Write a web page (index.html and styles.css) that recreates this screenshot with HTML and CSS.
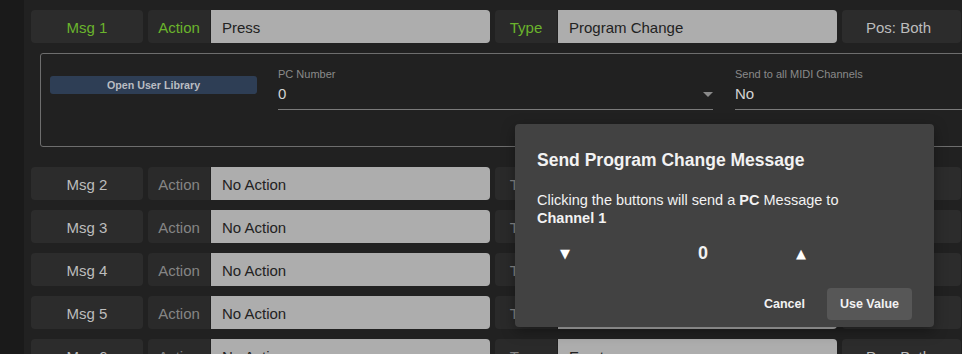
FILE: index.html
```html
<!DOCTYPE html>
<html lang="en">
<head>
  <meta charset="UTF-8" />
  <title>Messages</title>
  <link rel="stylesheet" href="styles.css">
</head>
<body>

<div class="app">
  <div class="sidebar"></div>

  <main class="main">
    <div class="row active">
      <div class="cell msg">Msg 1</div>
      <div class="field">
        <div class="label">Action</div>
        <div class="value">Press</div>
      </div>
      <div class="field">
        <div class="label">Type</div>
        <div class="value">Program Change</div>
      </div>
      <div class="cell pos">Pos: Both</div>
    </div>

    <div class="panel">
      <button class="lib-btn">Open User Library</button>
      <div class="input-field">
        <div class="input-label">PC Number</div>
        <div class="input-value">0 <span class="caret"></span></div>
      </div>
      <div class="input-field">
        <div class="input-label">Send to all MIDI Channels</div>
        <div class="input-value">No</div>
      </div>
    </div>

    <div class="row">
      <div class="cell msg">Msg 2</div>
      <div class="field"><div class="label">Action</div><div class="value">No Action</div></div>
      <div class="field"><div class="label">Type</div><div class="value">Empty</div></div>
      <div class="cell pos">Pos: Both</div>
    </div>
    <div class="row">
      <div class="cell msg">Msg 3</div>
      <div class="field"><div class="label">Action</div><div class="value">No Action</div></div>
      <div class="field"><div class="label">Type</div><div class="value">Empty</div></div>
      <div class="cell pos">Pos: Both</div>
    </div>
    <div class="row">
      <div class="cell msg">Msg 4</div>
      <div class="field"><div class="label">Action</div><div class="value">No Action</div></div>
      <div class="field"><div class="label">Type</div><div class="value">Empty</div></div>
      <div class="cell pos">Pos: Both</div>
    </div>
    <div class="row">
      <div class="cell msg">Msg 5</div>
      <div class="field"><div class="label">Action</div><div class="value">No Action</div></div>
      <div class="field"><div class="label">Type</div><div class="value">Empty</div></div>
      <div class="cell pos">Pos: Both</div>
    </div>
    <div class="row">
      <div class="cell msg">Msg 6</div>
      <div class="field"><div class="label">Action</div><div class="value">No Action</div></div>
      <div class="field"><div class="label">Type</div><div class="value">Empty</div></div>
      <div class="cell pos">Pos: Both</div>
    </div>
  </main>
</div>

<!-- PC dialog -->
<div class="dialog">
  <h2 class="dialog-title">Send Program Change Message</h2>
  <p class="dialog-text">Clicking the buttons will send a <b>PC</b> Message to<br><b>Channel 1</b></p>
  <div class="stepper">
    <button class="step-btn">&#9660;</button>
    <span class="step-value">0</span>
    <button class="step-btn up">&#9650;</button>
  </div>
  <div class="dialog-actions">
    <button class="text-btn">Cancel</button>
    <button class="use-btn">Use Value</button>
  </div>
</div>

</body>
</html>
```

FILE: styles.css
```css
body {
  font-family: "Liberation Sans", Arial, sans-serif;
  margin: 0;
  padding: 0;
  background-color: #1a1a1a;
  width: 962px;
  height: 354px;
  overflow: hidden;
  position: relative;
}

.app {
  display: flex;
  height: 354px;
}

.sidebar {
  width: 24px;
  flex-shrink: 0;
  background-color: #1a1a1a;
}

.main {
  flex: 1;
  background-color: #212121;
  padding: 10px 0 0 7px;
  overflow: hidden;
}

.row {
  display: flex;
  gap: 5px;
  height: 33px;
  margin-bottom: 10px;
  font-size: 15px;
}

.cell {
  background-color: #2c2c2c;
  border-radius: 4px;
  color: #bdbdbd;
  text-align: center;
  line-height: 35px;
  flex-shrink: 0;
}

.msg {
  width: 112px;
}

.pos {
  width: 113px;
  padding-right: 6px;
}

.field {
  display: flex;
  gap: 1px;
  flex-shrink: 0;
}

.label {
  width: 62px;
  background-color: #2a2a2a;
  border-radius: 4px 0 0 4px;
  color: #858585;
  text-align: center;
  line-height: 35px;
}

.value {
  width: 268px;
  padding-left: 11px;
  background-color: #adadad;
  border-radius: 0 4px 4px 0;
  color: #222;
  line-height: 35px;
}

.active .msg,
.active .label {
  color: #6ab42c;
}

.panel {
  display: flex;
  align-items: flex-start;
  width: 960px;
  height: 92px;
  margin: 0 0 20px 9px;
  border: 1px solid #6e6e6e;
  border-radius: 3px;
}

.lib-btn {
  width: 207px;
  height: 18px;
  margin: 22px 0 0 9px;
  padding: 0;
  border: none;
  border-radius: 3px;
  background-color: #2e3e55;
  color: #b9bcc2;
  font-family: inherit;
  font-size: 10.7px;
  font-weight: bold;
  flex-shrink: 0;
}

.input-field {
  width: 435px;
  margin: 13px 0 0 21px;
  flex-shrink: 0;
}

.input-field + .input-field {
  margin-left: 22px;
}

.input-label {
  font-size: 11px;
  color: #8a8a8a;
  line-height: 14px;
}

.input-value {
  position: relative;
  font-size: 15px;
  color: #d4d4d4;
  line-height: 20px;
  height: 20px;
  padding: 3px 0 5px;
  border-bottom: 1px solid #7a7a7a;
}

.caret {
  position: absolute;
  right: 0;
  top: 11px;
  border-left: 5px solid transparent;
  border-right: 5px solid transparent;
  border-top: 5px solid #8a8a8a;
}

/* dialog over the list */
.dialog {
  position: absolute;
  left: 515px;
  top: 124px;
  width: 419px;
  height: 203px;
  box-sizing: border-box;
  padding: 25px 22px 7px;
  background-color: #424242;
  border-radius: 4px;
  box-shadow: 0 4px 14px rgba(0, 0, 0, 0.35);
  color: #f2f2f2;
}

.dialog-title {
  margin: 0;
  font-size: 17.5px;
  font-weight: bold;
  line-height: 22px;
}

.dialog-text {
  margin: 20px 0 0;
  font-size: 14.5px;
  line-height: 18px;
}

.stepper {
  display: flex;
  align-items: center;
  height: 34px;
  margin-top: 9px;
}

.step-btn {
  width: 56px;
  padding: 0;
  border: none;
  background: none;
  color: #fff;
  font-size: 13px;
  font-family: "DejaVu Sans", sans-serif;
}

.step-value {
  width: 48px;
  margin-left: 86px;
  text-align: center;
  font-size: 18px;
  font-weight: bold;
}

.step-btn.up {
  width: 48px;
  margin-left: 50px;
}

.dialog-actions {
  display: flex;
  justify-content: flex-end;
  align-items: center;
  gap: 10px;
  margin-top: 18px;
}

.text-btn,
.use-btn {
  height: 32px;
  border: none;
  border-radius: 4px;
  font-family: inherit;
  font-size: 12.5px;
  font-weight: bold;
  color: #f2f2f2;
}

.text-btn {
  background: none;
  padding: 0 12px;
}

.use-btn {
  width: 85px;
  background-color: #575757;
}
```
